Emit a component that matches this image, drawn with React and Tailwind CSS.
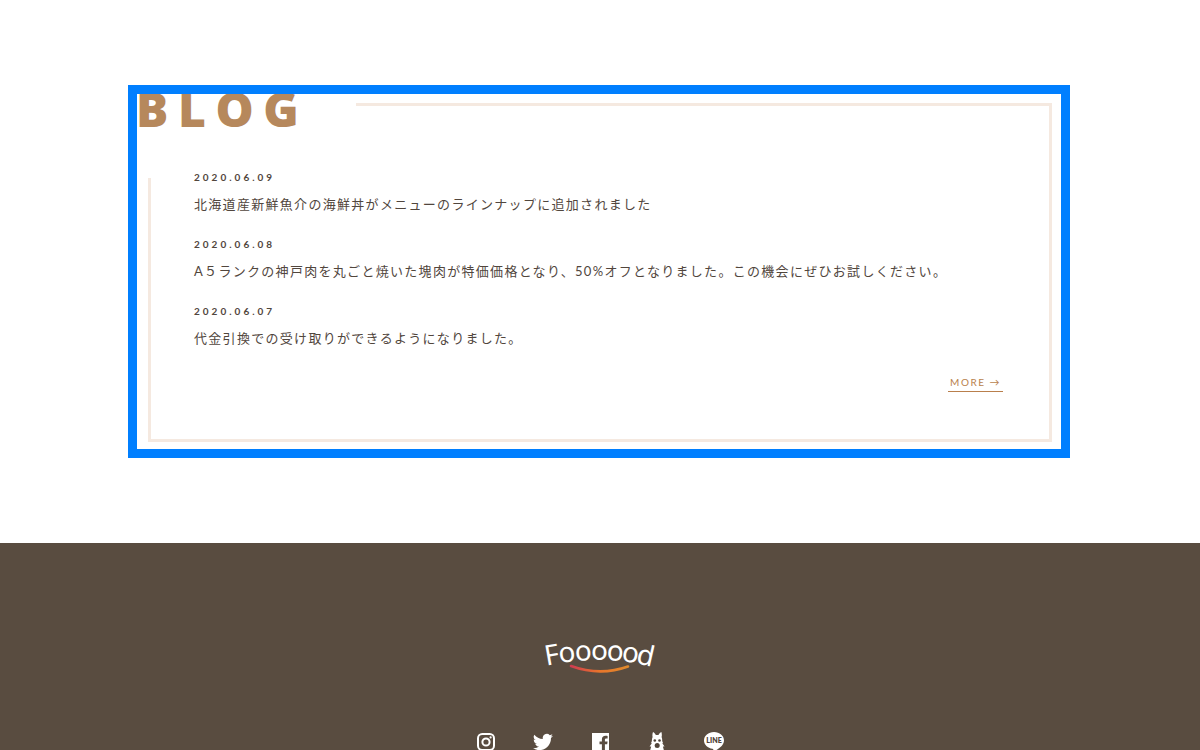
import React from "react";

const posts = [
  { date: "2020.06.09", title: "北海道産新鮮魚介の海鮮丼がメニューのラインナップに追加されました" },
  { date: "2020.06.08", title: "A５ランクの神戸肉を丸ごと焼いた塊肉が特価価格となり、50%オフとなりました。この機会にぜひお試しください。" },
  { date: "2020.06.07", title: "代金引換での受け取りができるようになりました。" },
];

const logoLetters = [
  { char: "F", x: 9.5, y: 25.5, turn: -10 },
  { char: "o", x: 24, y: 23, turn: -7 },
  { char: "o", x: 39.7, y: 21.5, turn: -3 },
  { char: "o", x: 55.5, y: 20.7, turn: 0 },
  { char: "o", x: 70.8, y: 21.7, turn: 4 },
  { char: "o", x: 85.5, y: 23.3, turn: 8 },
  { char: "d", x: 99.7, y: 26, turn: 13 },
];

function Logo() {
  return (
    <svg width="112" height="40" viewBox="0 0 112 40" role="img" aria-label="Foooood" className="overflow-visible">
      <defs>
        <linearGradient id="smile" x1="0" x2="1" y1="0" y2="0">
          <stop offset="0" stopColor="#cf3c50" />
          <stop offset="0.5" stopColor="#e8752b" />
          <stop offset="1" stopColor="#e08a2c" />
        </linearGradient>
      </defs>
      <g fill="#fff" fontSize="28" fontFamily="'Noto Sans', sans-serif" textAnchor="middle">
        {logoLetters.map((l, i) => (
          <text key={i} transform={`translate(${l.x} ${l.y}) rotate(${l.turn})`}>
            {l.char}
          </text>
        ))}
      </g>
      <path d="M27 27 Q56 37.500 84 27.500" fill="none" stroke="url(#smile)" strokeWidth="2.600" strokeLinecap="round" />
    </svg>
  );
}

function Instagram() {
  return (
    <svg width="20" height="20" viewBox="0 0 20 20" fill="none" stroke="#fff">
      <rect x="2" y="2" width="16" height="16" rx="4.2" strokeWidth="2" />
      <circle cx="10" cy="10" r="3.6" strokeWidth="2" />
      <circle cx="14.6" cy="5.4" r="1.1" fill="#fff" stroke="none" />
    </svg>
  );
}

function Twitter() {
  return (
    <svg width="20" height="20" viewBox="0 0 24 24" fill="#fff">
      <path d="M23.95 4.57a10 10 0 0 1-2.82.77 4.96 4.96 0 0 0 2.16-2.72c-.95.56-2 .96-3.13 1.18a4.92 4.92 0 0 0-8.38 4.48C7.69 8.1 4.07 6.13 1.64 3.16a4.92 4.92 0 0 0 1.52 6.57 4.9 4.9 0 0 1-2.23-.61v.06a4.92 4.92 0 0 0 3.95 4.83 5 5 0 0 1-2.21.08 4.94 4.94 0 0 0 4.6 3.42A9.87 9.87 0 0 1 0 19.54a13.99 13.99 0 0 0 7.55 2.21c9.05 0 14-7.5 14-13.98 0-.21 0-.42-.02-.63a9.94 9.94 0 0 0 2.42-2.57z" />
    </svg>
  );
}

function Facebook() {
  return (
    <svg width="20" height="20" viewBox="0 0 20 20">
      <path fill="#fff" d="M2 1h17v18h-4.100v-6.700h2.300l.4-2.800H14.900V7.800c0-.8.3-1.400 1.400-1.400h1.300V3.900c-.3 0-1.100-.1-2.100-.1-2.200 0-3.600 1.300-3.600 3.700v2H9.500v2.800h2.400V19H2z" />
    </svg>
  );
}

function Mascot() {
  return (
    <svg width="20" height="20" viewBox="0 0 20 20">
      <path fill="#fff" d="M6 0c1.200.5 2.200 1.600 2.800 3h2.700C12.100 1.600 13.100.5 14.400 0c.5 1.600.6 3.400.2 5 .5 1.300.7 2.600.6 3.900l.8 2.100-.7.200 2.200 3.200-1.600.2 1.200 4.400H3l1.200-4.400-1.600-.2 2.200-3.200-.7-.2.8-2.100c-.1-1.300.1-2.600.7-3.900C5.200 3.400 5.400 1.600 6 0z" />
      <circle cx="7.800" cy="8.500" r="1.300" fill="#51453a" />
      <circle cx="12.500" cy="8.500" r="1.300" fill="#51453a" />
      <circle cx="10.200" cy="13.500" r="2.500" fill="#51453a" />
    </svg>
  );
}

function Line() {
  return (
    <svg width="20" height="20" viewBox="0 0 20 20">
      <path fill="#fff" d="M10 0C4.400 0 0 3.700 0 8.400c0 4.200 3.700 7.600 8.500 8.300.9.200.9.700.7 2.400 0 .5.200.7.700.4C12.500 18 20 14 20 8.400 20 3.700 15.600 0 10 0z" />
      <text x="10" y="11" textAnchor="middle" fontSize="7" fontWeight="800" fill="#51453a" fontFamily="Lato, sans-serif">LINE</text>
    </svg>
  );
}

const links = [
  { name: "Instagram", Icon: Instagram },
  { name: "Twitter", Icon: Twitter },
  { name: "Facebook", Icon: Facebook },
  { name: "Mascot", Icon: Mascot },
  { name: "LINE", Icon: Line },
];

export default function App() {
  return (
    <div className="flex h-screen flex-col overflow-hidden bg-white font-['Lato','Noto_Sans_CJK_JP',sans-serif] text-[#51463d]">
      <main className="shrink-0 pt-[85px] pr-[130px] pb-[85px] pl-32">
        <section className="relative border-[9px] border-[#007fff] px-[9px] pt-[9px] pb-[7px] pl-[11px]">
          <h2 className="absolute top-0 left-0 h-[84px] w-[219px] overflow-hidden bg-white font-['Open_Sans',sans-serif] text-[48px] leading-[30px] font-extrabold tracking-[0.2em] text-[#b6885c]">
            <span className="-ml-px">BLOG</span>
          </h2>
          <div className="border-[3px] border-[#f5e9e0] px-[43px] pt-[61px] pb-[47px]">
            <ul className="relative flex flex-col gap-4">
              {posts.map((p) => (
                <li key={p.date}>
                  <time className="block text-[10px] leading-5 font-bold tracking-[0.3em]">{p.date}</time>
                  <a href="#" className="mt-1 block text-[13px] leading-[27px] tracking-[0.1em] whitespace-nowrap">
                    {p.title}
                  </a>
                </li>
              ))}
            </ul>
            <div className="mt-[21px] flex justify-end pr-[3px]">
              <a href="#" className="border-b border-[#b97f4c] px-[2px] text-[10px] leading-[18px] tracking-[0.15em] text-[#b97f4c]">
                MORE →
              </a>
            </div>
          </div>
        </section>
      </main>
      <footer className="flex flex-1 shrink-0 flex-col items-center bg-[#594c40] pt-24">
        <a href="#" aria-label="Foooood" className="block">
          <Logo />
        </a>
        <ul className="mt-[53px] flex gap-[37px]">
          {links.map(({ name, Icon }) => (
            <li key={name}>
              <a href="#" aria-label={name} className="block">
                <Icon />
              </a>
            </li>
          ))}
        </ul>
      </footer>
    </div>
  );
}
